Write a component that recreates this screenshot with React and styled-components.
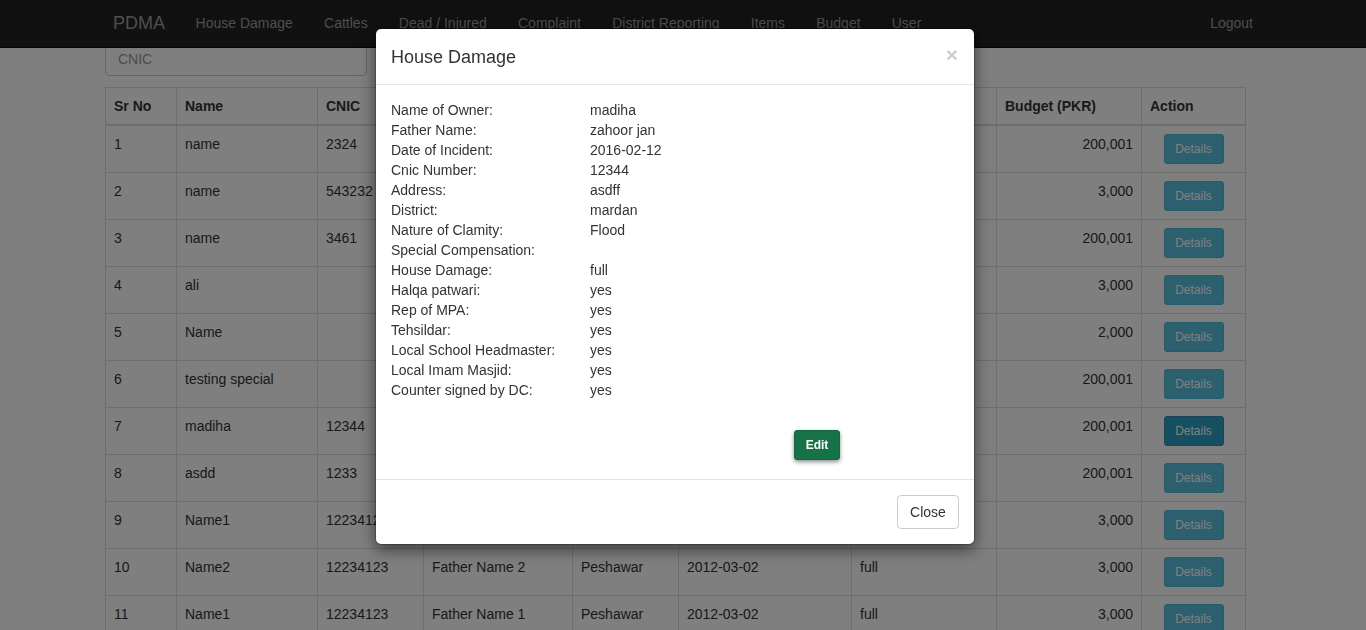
import React from 'react';
import styled, { createGlobalStyle } from 'styled-components';

const GlobalStyle = createGlobalStyle`
  * { box-sizing: border-box; }
  html, body {
    margin: 0;
    padding: 0;
    overflow: hidden;
    background: #fff;
  }
  body {
    font-family: "Liberation Sans", Arial, sans-serif;
    font-size: 14px;
    line-height: 1.42857;
    color: #333;
  }
`;

const Navbar = styled.nav`
  position: fixed;
  top: 0;
  left: 0;
  right: 0;
  height: 48px;
  background: #222;
  border-bottom: 1px solid #080808;
  z-index: 1030;
`;

const NavInner = styled.div`
  width: 1170px;
  margin: 0 auto;
  padding: 0 15px 2px;
  display: flex;
  align-items: center;
  height: 100%;
`;

const Brand = styled.a`
  font-size: 18px;
  line-height: 20px;
  color: #9d9d9d;
  padding: 0 15px 0 0;
  text-decoration: none;
`;

const NavLinks = styled.ul`
  display: flex;
  list-style: none;
  margin: 0;
  padding: 0;
  flex: 1;
`;

const NavLink = styled.li`
  padding: 0 15.6px;
  color: #9d9d9d;
  line-height: 20px;
  margin-left: ${p => (p.$push ? 'auto' : '0')};
  margin-right: ${p => (p.$push ? '-15.6px' : '0')};
`;

const Page = styled.div`
  width: 1170px;
  margin: 0 auto;
  padding: 42px 8px 0 7px;
`;

const SearchInput = styled.input`
  display: block;
  width: 262px;
  height: 34px;
  padding: 6px 12px;
  font-family: inherit;
  font-size: 14px;
  color: #555;
  border: 1px solid #ccc;
  border-radius: 4px;
  box-shadow: inset 0 1px 1px rgba(0, 0, 0, 0.075);
  margin-bottom: 11px;
  &::placeholder { color: #999; }
`;

const Table = styled.table`
  width: 1140px;
  table-layout: fixed;
  border-collapse: collapse;
  border: 1px solid #ddd;
`;

const Th = styled.th`
  text-align: left;
  padding: 8px;
  line-height: 20px;
  border: 1px solid #ddd;
  border-bottom: 2px solid #ddd;
  font-weight: bold;
  vertical-align: bottom;
`;

const Td = styled.td`
  padding: 8px;
  line-height: 20px;
  border: 1px solid #ddd;
  vertical-align: top;
  height: 47px;
  text-align: ${p => p.$align || 'left'};
  white-space: nowrap;
  overflow: hidden;
`;

const DetailsButton = styled.button`
  font-family: inherit;
  font-size: 12px;
  line-height: 1.5;
  padding: 5px 10px;
  width: 60px;
  height: 30px;
  color: #fff;
  background: ${p => (p.$active ? '#2a9fc4' : '#5bc0de')};
  border: 1px solid ${p => (p.$active ? '#3a86b8' : '#46b8da')};
  border-radius: 3px;
`;

const Backdrop = styled.div`
  position: fixed;
  inset: 0;
  background: rgba(0, 0, 0, 0.5);
  z-index: 1040;
`;

const Modal = styled.div`
  position: fixed;
  top: 28px;
  left: 375px;
  width: 600px;
  background: #fff;
  border: 1px solid rgba(0, 0, 0, 0.2);
  border-radius: 6px;
  box-shadow: 0 5px 15px rgba(0, 0, 0, 0.5);
  z-index: 1050;
  background-clip: padding-box;
`;

const ModalHeader = styled.div`
  display: flex;
  align-items: center;
  justify-content: space-between;
  padding: 15px 15px 14px;
  border-bottom: 1px solid #e5e5e5;
`;

const ModalTitle = styled.h4`
  margin: 0;
  font-size: 18px;
  font-weight: 500;
  line-height: 26px;
  color: #333;
`;

const CloseX = styled.span`
  font-size: 21px;
  font-weight: bold;
  line-height: 1;
  color: #000;
  opacity: 0.2;
  margin-top: -6px;
  margin-right: 1px;
`;

const ModalBody = styled.div`
  padding: 15px 15px 19px;
`;

const InfoGrid = styled.div`
  display: grid;
  grid-template-columns: 199px 1fr;
  line-height: 20px;
`;

const EditButton = styled.button`
  display: block;
  margin: 30px 0 0 403px;
  width: 46px;
  height: 30px;
  font-family: inherit;
  font-size: 12px;
  font-weight: bold;
  color: #fff;
  background: #157347;
  border: 1px solid #12683f;
  border-radius: 3px;
  box-shadow: 0 2px 4px rgba(0, 0, 0, 0.45);
`;

const ModalFooter = styled.div`
  display: flex;
  justify-content: flex-end;
  padding: 15px;
  border-top: 1px solid #e5e5e5;
`;

const CloseButton = styled.button`
  font-family: inherit;
  font-size: 14px;
  line-height: 20px;
  padding: 6px 12px;
  height: 34px;
  width: 62px;
  color: #333;
  background: #fff;
  border: 1px solid #ccc;
  border-radius: 4px;
`;

const navItems = ['House Damage', 'Cattles', 'Dead / Injured', 'Complaint', 'District Reporting', 'Items', 'Budget', 'User'];

const columns = [
  { label: 'Sr No', width: 71 },
  { label: 'Name', width: 141 },
  { label: 'CNIC', width: 106 },
  { label: 'Father Name', width: 149 },
  { label: 'District', width: 106 },
  { label: 'Date', width: 173 },
  { label: 'House Damage', width: 145 },
  { label: 'Budget (PKR)', width: 145 },
  { label: 'Action', width: 104 },
];

const rows = [
  [1, 'name', '2324', 'father', 'Peshawar', '2016-01-10', 'full', '200,001'],
  [2, 'name', '543232', 'father', 'Peshawar', '2016-01-10', 'partial', '3,000'],
  [3, 'name', '3461', 'father', 'Peshawar', '2016-01-10', 'full', '200,001'],
  [4, 'ali', '', 'ahmad', 'mardan', '2016-01-12', 'partial', '3,000'],
  [5, 'Name', '', 'Father', 'Peshawar', '2016-01-12', 'partial', '2,000'],
  [6, 'testing special', '', 'testing', 'Peshawar', '2016-02-01', 'full', '200,001'],
  [7, 'madiha', '12344', 'zahoor jan', 'mardan', '2016-02-12', 'full', '200,001'],
  [8, 'asdd', '1233', 'asdd', 'mardan', '2016-02-12', 'full', '200,001'],
  [9, 'Name1', '12234123', 'Father Name 1', 'Peshawar', '2012-03-02', 'full', '3,000'],
  [10, 'Name2', '12234123', 'Father Name 2', 'Peshawar', '2012-03-02', 'full', '3,000'],
  [11, 'Name1', '12234123', 'Father Name 1', 'Peshawar', '2012-03-02', 'full', '3,000'],
];

const details = [
  ['Name of Owner:', 'madiha'],
  ['Father Name:', 'zahoor jan'],
  ['Date of Incident:', '2016-02-12'],
  ['Cnic Number:', '12344'],
  ['Address:', 'asdff'],
  ['District:', 'mardan'],
  ['Nature of Clamity:', 'Flood'],
  ['Special Compensation:', ''],
  ['House Damage:', 'full'],
  ['Halqa patwari:', 'yes'],
  ['Rep of MPA:', 'yes'],
  ['Tehsildar:', 'yes'],
  ['Local School Headmaster:', 'yes'],
  ['Local Imam Masjid:', 'yes'],
  ['Counter signed by DC:', 'yes'],
];

export default function App() {
  return (
    <>
      <GlobalStyle />
      <Navbar>
        <NavInner>
          <Brand>PDMA</Brand>
          <NavLinks>
            {navItems.map(item => (
              <NavLink key={item}>{item}</NavLink>
            ))}
            <NavLink $push>Logout</NavLink>
          </NavLinks>
        </NavInner>
      </Navbar>

      <Page>
        <SearchInput placeholder="CNIC" />
        <Table>
          <colgroup>
            {columns.map(c => (
              <col key={c.label} style={{ width: c.width }} />
            ))}
          </colgroup>
          <thead>
            <tr>
              {columns.map(c => (
                <Th key={c.label}>{c.label}</Th>
              ))}
            </tr>
          </thead>
          <tbody>
            {rows.map(r => (
              <tr key={r[0]}>
                {r.slice(0, 7).map((cell, i) => (
                  <Td key={i}>{cell}</Td>
                ))}
                <Td $align="right">{r[7]}</Td>
                <Td $align="center">
                  <DetailsButton $active={r[0] === 7}>Details</DetailsButton>
                </Td>
              </tr>
            ))}
          </tbody>
        </Table>
      </Page>

      <Backdrop />
      <Modal>
        <ModalHeader>
          <ModalTitle>House Damage</ModalTitle>
          <CloseX>×</CloseX>
        </ModalHeader>
        <ModalBody>
          <InfoGrid>
            {details.map(([label, value]) => (
              <React.Fragment key={label}>
                <span>{label}</span>
                <span>{value}</span>
              </React.Fragment>
            ))}
          </InfoGrid>
          <EditButton>Edit</EditButton>
        </ModalBody>
        <ModalFooter>
          <CloseButton>Close</CloseButton>
        </ModalFooter>
      </Modal>
    </>
  );
}
